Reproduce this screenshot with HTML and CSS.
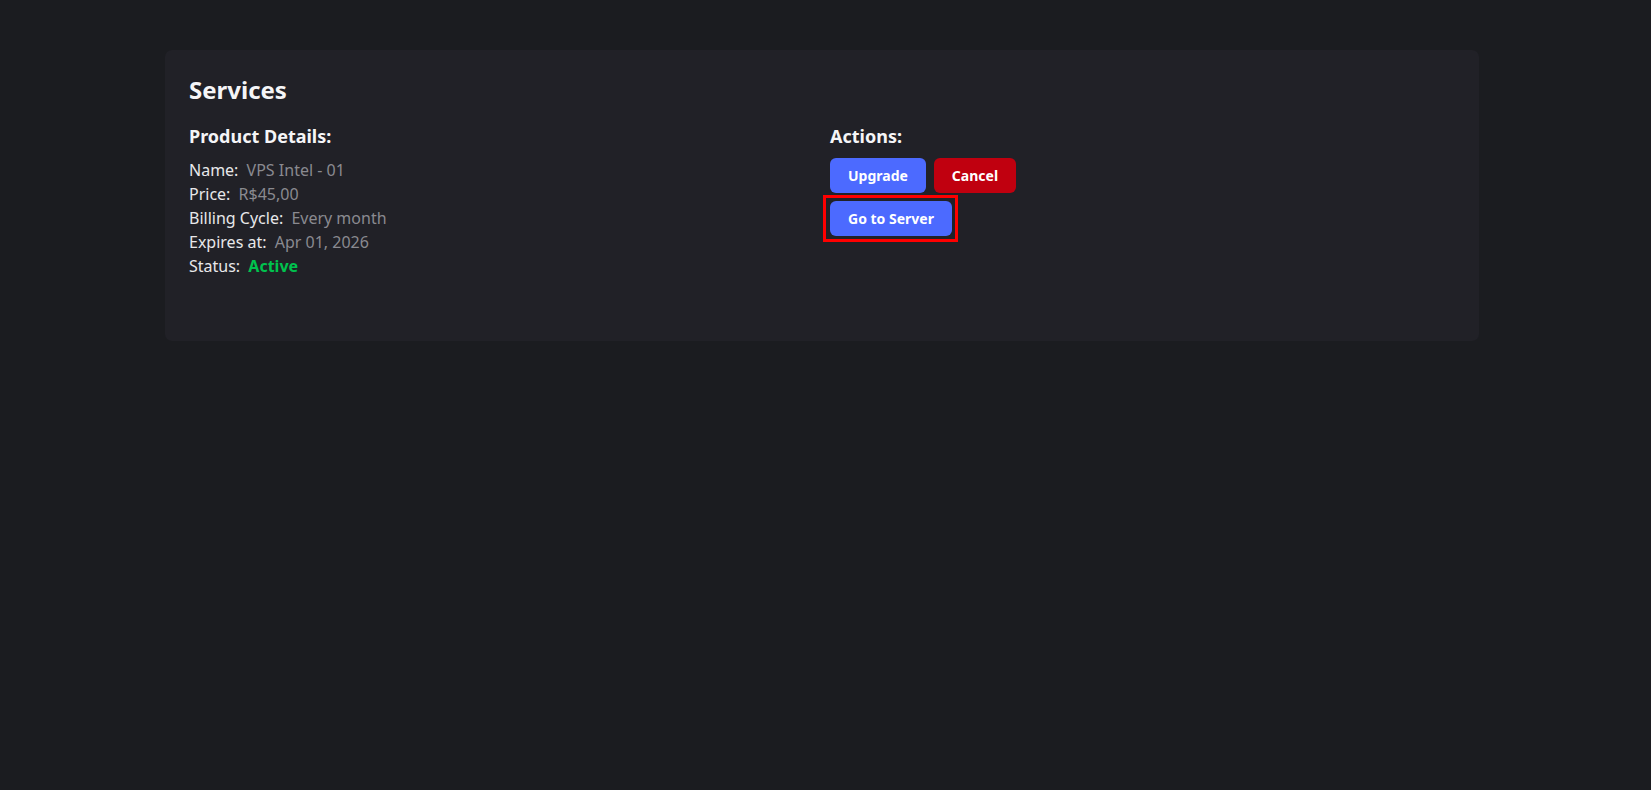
FILE: index.html
```html
<!DOCTYPE html>
<html lang="en">
<head>
<meta charset="utf-8">
<title>Services</title>
<link rel="stylesheet" href="styles.css">
</head>
<body>
<main class="page">
  <section class="card">
    <h2 class="title">Services</h2>
    <div class="grid">
      <div class="col">
        <h3 class="subtitle">Product Details:</h3>
        <ul class="details">
          <li><span class="label">Name:</span> <span class="value">VPS Intel - 01</span></li>
          <li><span class="label">Price:</span> <span class="value">R$45,00</span></li>
          <li><span class="label">Billing Cycle:</span> <span class="value">Every month</span></li>
          <li><span class="label">Expires at:</span> <span class="value">Apr 01, 2026</span></li>
          <li><span class="label">Status:</span> <span class="value active">Active</span></li>
        </ul>
      </div>
      <div class="col">
        <h3 class="subtitle">Actions:</h3>
        <div class="actions">
          <div class="row">
            <button class="btn btn-primary">Upgrade</button>
            <button class="btn btn-danger">Cancel</button>
          </div>
          <div class="row">
            <span class="highlight">
              <button class="btn btn-primary">Go to Server</button>
            </span>
          </div>
        </div>
      </div>
    </div>
  </section>
</main>
</body>
</html>
```

FILE: styles.css
```css
* { box-sizing: border-box; }
html, body { margin: 0; padding: 0; }
body {
  background: #1b1c20;
  font-family: "Noto Sans", "Open Sans", sans-serif;
  color: #e6e6e8;
  min-height: 790px;
}
.page {
  padding: 50px 172px 0 165px;
}
.card {
  background: #212127;
  border-radius: 7px;
  padding: 24px 24px 63px 24px;
  width: 1314px;
}
.title {
  margin: 0 0 16px 0;
  font-size: 24px;
  line-height: 32px;
  font-weight: 700;
  color: #f5f5f7;
}
.grid {
  display: grid;
  grid-template-columns: 1fr 1fr;
  column-gap: 16px;
}
.subtitle {
  margin: 0 0 8px 0;
  font-size: 18px;
  line-height: 28px;
  font-weight: 700;
  color: #f5f5f7;
}
.details {
  list-style: none;
  margin: 0;
  padding: 0;
  font-size: 16px;
  line-height: 24px;
}
.label {
  color: #e8e8ea;
  margin-right: 4px;
}
.value { color: #8a8a90; }
.value.active {
  color: #00c24e;
  font-weight: 700;
}
.actions {
  display: flex;
  flex-direction: column;
  gap: 8px;
}
.row {
  display: flex;
  gap: 8px;
}
.btn {
  font-family: "Noto Sans", "Open Sans", sans-serif;
  font-size: 14px;
  font-weight: 700;
  line-height: 19px;
  padding: 8px 18px;
  height: 35px;
  border: none;
  border-radius: 6px;
  color: #ffffff;
  cursor: pointer;
  display: block;
}
.btn-primary { background: #4c6aff; }
.btn-danger { background: #c0000f; }
.highlight {
  position: relative;
  display: block;
}
.highlight::after {
  content: "";
  position: absolute;
  top: -6px;
  left: -7px;
  right: -6px;
  bottom: -6px;
  border: 3px solid #ff0000;
  pointer-events: none;
}
```
